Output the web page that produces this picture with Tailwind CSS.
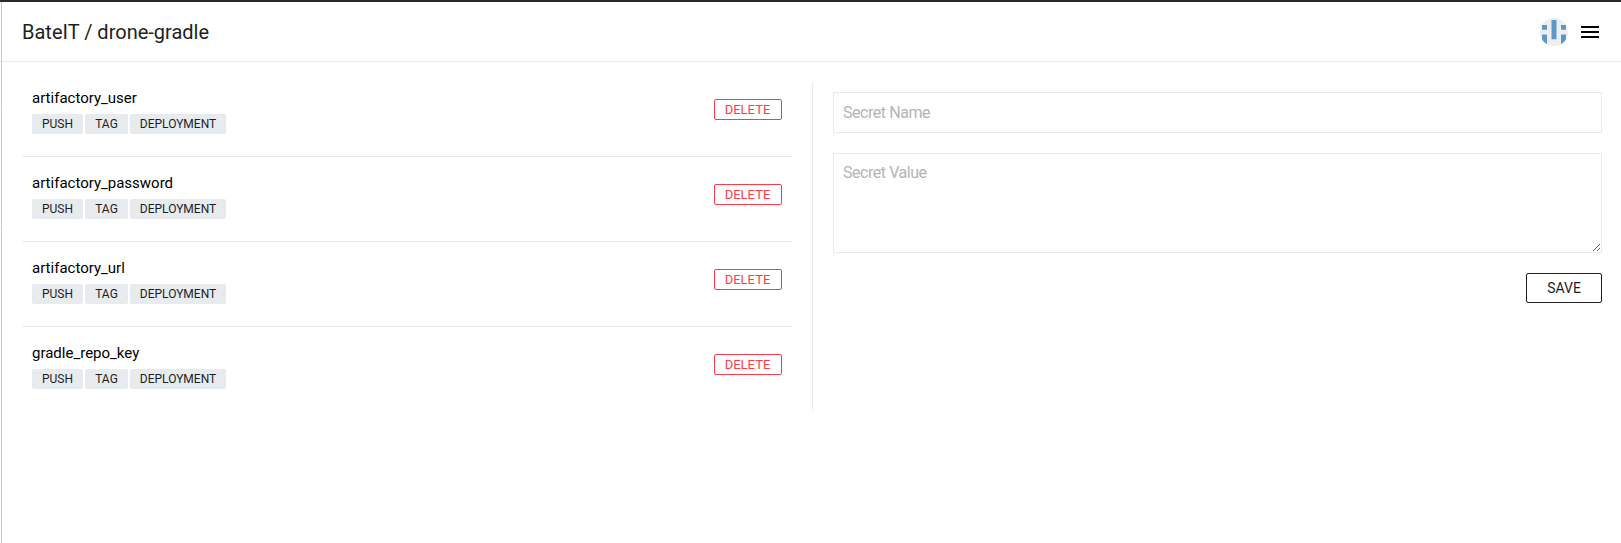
<!DOCTYPE html>
<html lang="en">
<head>
<meta charset="utf-8">
<title>BateIT / drone-gradle</title>
<script src="https://cdn.jsdelivr.net/npm/@tailwindcss/browser@4"></script>
</head>
<body class="h-screen overflow-hidden bg-white font-['Roboto',sans-serif] text-black">
<div class="flex h-[543px] flex-col border-t-2 border-[#2b292c]">
  <div class="flex min-h-0 grow">
    <div class="w-px shrink-0 pt-[59px]"><div class="h-px bg-[#e8eaed]"></div><div class="mt-[44px] h-px bg-[#e8eaed]"></div><div class="mt-[121px] h-px bg-[#dde6ee]"></div></div>
    <div class="min-w-0 grow border-l border-[#c9cacc]">
      <header class="flex h-[60px] items-center border-b border-[#e8eaed] pl-5 pr-[22px] pt-px">
        <h1 class="grow text-[20px] leading-6 text-[#1e1e1e]">BateIT / drone-gradle</h1>
        <svg class="mr-[13px] size-7" viewBox="0 0 28 28">
          <defs><clipPath id="avatar"><circle cx="14" cy="14" r="14"/></clipPath></defs>
          <g clip-path="url(#avatar)"><path fill="#eeeeee" d="M0 0h28v28H0z"/><path fill="#5b97c9" d="M11.500 2h5v19.200h-5zM2 7h5v4.700H2zM21 7h5v4.700h-5zM2 16.500h5V28H2zM21 16.500h5V28h-5z"/></g>
        </svg>
        <div class="flex w-[18px] flex-col gap-[3px]"><div class="h-0.5 bg-black"></div><div class="h-0.5 bg-black"></div><div class="h-0.5 bg-black"></div></div>
      </header>
      <main class="flex pl-5 pr-[19px] pt-5">
        <section class="flex h-[329px] w-[791px] shrink-0 flex-col border-r border-[#e8eaed] pr-5">
          <div class="flex h-[75px] items-end justify-between border-b border-[#e8eaed] px-2.5 pb-[22px]">
            <div><div class="mb-1.5 text-[15px] leading-5">artifactory_user</div><div class="flex gap-0.5 text-[12px] leading-5 text-[#1e1e1e]"><span class="w-[51px] rounded-xs bg-[#e8ebee] text-center">PUSH</span><span class="w-[43px] rounded-xs bg-[#e8ebee] text-center">TAG</span><span class="w-24 rounded-xs bg-[#e8ebee] text-center">DEPLOYMENT</span></div></div>
            <button class="mb-3.5 h-[21px] w-[68px] rounded-xs border border-[#fc3c4c] pr-px text-[13px] leading-[19px] text-[#fc3c4c]">DELETE</button>
          </div>
          <div class="flex h-[85px] items-end justify-between border-b border-[#e8eaed] px-2.5 pb-[22px]">
            <div><div class="mb-1.5 text-[15px] leading-5">artifactory_password</div><div class="flex gap-0.5 text-[12px] leading-5 text-[#1e1e1e]"><span class="w-[51px] rounded-xs bg-[#e8ebee] text-center">PUSH</span><span class="w-[43px] rounded-xs bg-[#e8ebee] text-center">TAG</span><span class="w-24 rounded-xs bg-[#e8ebee] text-center">DEPLOYMENT</span></div></div>
            <button class="mb-3.5 h-[21px] w-[68px] rounded-xs border border-[#fc3c4c] pr-px text-[13px] leading-[19px] text-[#fc3c4c]">DELETE</button>
          </div>
          <div class="flex h-[85px] items-end justify-between border-b border-[#e8eaed] px-2.5 pb-[22px]">
            <div><div class="mb-1.5 text-[15px] leading-5">artifactory_url</div><div class="flex gap-0.5 text-[12px] leading-5 text-[#1e1e1e]"><span class="w-[51px] rounded-xs bg-[#e8ebee] text-center">PUSH</span><span class="w-[43px] rounded-xs bg-[#e8ebee] text-center">TAG</span><span class="w-24 rounded-xs bg-[#e8ebee] text-center">DEPLOYMENT</span></div></div>
            <button class="mb-3.5 h-[21px] w-[68px] rounded-xs border border-[#fc3c4c] pr-px text-[13px] leading-[19px] text-[#fc3c4c]">DELETE</button>
          </div>
          <div class="flex h-[84px] items-end justify-between px-2.5 pb-[22px]">
            <div><div class="mb-1.5 text-[15px] leading-5">gradle_repo_key</div><div class="flex gap-0.5 text-[12px] leading-5 text-[#1e1e1e]"><span class="w-[51px] rounded-xs bg-[#e8ebee] text-center">PUSH</span><span class="w-[43px] rounded-xs bg-[#e8ebee] text-center">TAG</span><span class="w-24 rounded-xs bg-[#e8ebee] text-center">DEPLOYMENT</span></div></div>
            <button class="mb-3.5 h-[21px] w-[68px] rounded-xs border border-[#fc3c4c] pr-px text-[13px] leading-[19px] text-[#fc3c4c]">DELETE</button>
          </div>
        </section>
        <form class="flex grow flex-col items-end pl-5 pt-2.5">
          <input class="h-[41px] w-full border border-[#e8eaed] px-[9px] text-[16px] tracking-[-0.45px] placeholder:text-[#b4b4b4]" placeholder="Secret Name">
          <textarea class="mt-5 block h-[100px] w-full resize border border-[#e8eaed] px-[9px] py-[9px] text-[16px] leading-5 tracking-[-0.45px] placeholder:text-[#b4b4b4]" placeholder="Secret Value"></textarea>
          <button type="button" class="mt-5 h-[30px] w-[76px] rounded-xs border border-[#1e1e1e] text-[14px] leading-7 text-[#1e1e1e]">SAVE</button>
        </form>
      </main>
    </div>
  </div>
</div>
</body>
</html>
